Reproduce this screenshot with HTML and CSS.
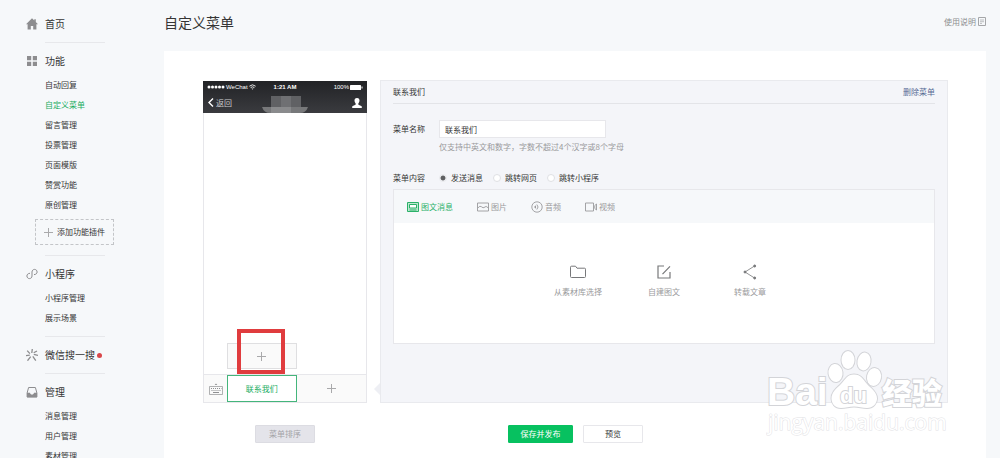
FILE: index.html
```
<!DOCTYPE html>
<html lang="zh-CN">
<head>
  <meta charset="UTF-8">
  <meta name="viewport" content="width=device-width, initial-scale=1.0">
  <title>自定义菜单</title>
  <link rel="stylesheet" href="styles.css">
</head>
<body>
  <nav class="sidebar">
    <div class="group">
      <a href="#" class="heading">
        <svg class="icon" viewBox="0 0 12 12"><path fill="#8d8d8f" d="M6 0.3L0 6.2h1.6V11.6h3.2V8h2.4v3.6h3.2V6.2H12L9.8 4V1.2H8.3v1.3z"/></svg>
        首页
      </a>
    </div>
    <div class="group">
      <div class="heading">
        <svg class="icon" viewBox="0 0 12 12" fill="#8d8d8f"><path d="M1 1h4.200v4.200H1zM6.800 1H11v4.200H6.800zM1 6.800h4.200V11H1zM6.800 6.800H11V11H6.800z"/></svg>
        功能
      </div>
      <ul>
        <li><a href="#">自动回复</a></li>
        <li><a href="#" class="current">自定义菜单</a></li>
        <li><a href="#">留言管理</a></li>
        <li><a href="#">投票管理</a></li>
        <li><a href="#">页面模版</a></li>
        <li><a href="#">赞赏功能</a></li>
        <li><a href="#">原创管理</a></li>
      </ul>
      <button class="add-plugin">
        <svg class="plus" viewBox="0 0 9 9"><path d="M4.500 0v9M0 4.500h9"/></svg>
        添加功能插件
      </button>
    </div>
    <div class="group">
      <div class="heading">
        <svg class="icon" viewBox="0 0 12 12" fill="none" stroke="#8d8d8f" stroke-linecap="round"><path d="M3.600 5.300C1.900 5.400.9 6.600.9 8s1.100 2.600 2.500 2.600S6 9.600 6 8V4c0-1.500 1.100-2.600 2.600-2.600S11.100 2.600 11.100 4 10 6.500 8.400 6.600"/></svg>
        小程序
      </div>
      <ul>
        <li><a href="#">小程序管理</a></li>
        <li><a href="#">展示场景</a></li>
      </ul>
    </div>
    <div class="group">
      <a href="#" class="heading">
        <svg class="icon" viewBox="0 0 12 12" fill="none" stroke="#8d8d8f" stroke-width="1.300"><path d="M6.300 0L5.800 4M1.200 1.600L3.900 4.600M0 6.700l3.800-.5M1.500 11.700L4.700 7.700M6.800 7.300l3 4.300M7.800 5.300l4.200 1M7.700 3.800L11 2"/></svg>
        微信搜一搜<span class="dot"></span>
      </a>
    </div>
    <div class="group">
      <div class="heading">
        <svg class="icon" viewBox="0 0 12 12"><path fill="none" stroke="#8d8d8f" d="M2.600 1.500h6.800L10.900 7v4H1.100V7z"/><path fill="#8d8d8f" d="M1 6.800h3c.2 1.200.8 1.800 2 1.800s1.800-.6 2-1.800h3v4.400H1z"/></svg>
        管理
      </div>
      <ul>
        <li><a href="#">消息管理</a></li>
        <li><a href="#">用户管理</a></li>
        <li><a href="#">素材管理</a></li>
      </ul>
    </div>
  </nav>

  <main>
    <header class="page-header">
      <h1>自定义菜单</h1>
      <a href="#" class="help">使用说明
        <svg viewBox="0 0 8 9" width="8" height="9" fill="none" stroke="#a5a6a8"><path d="M.5.5h7v8h-7z"/><path stroke-width=".7" d="M2 3h4M2 4.700h4M2 6.400h2"/></svg>
      </a>
    </header>

    <div class="card">
      <div class="editor">
        <section class="phone">
          <div class="phone-top">
            <div class="status-bar">
              <span class="carrier">
                <svg viewBox="0 0 18 4" width="18" height="4" fill="#fff"><circle cx="2" cy="2" r="1.500"/><circle cx="5.500" cy="2" r="1.500"/><circle cx="9" cy="2" r="1.500"/><circle cx="12.500" cy="2" r="1.500"/><circle cx="16" cy="2" r="1.500"/></svg>
                WeChat
                <svg viewBox="0 0 7 6" width="7" height="6" fill="none" stroke="#e8e8e8"><path d="M.4 2.200Q3.500-.6 6.600 2.200M1.600 3.600q1.900-1.600 3.800 0"/><path fill="#e8e8e8" stroke="none" d="M2.500 4.400h2l-1 1.400z"/></svg>
              </span>
              <b>1:21 AM</b>
              <span class="battery">100%
                <svg viewBox="0 0 13 5" width="13" height="5" fill="#fff"><rect width="11" height="5" rx=".6"/><path d="M11.500 1.500h1v2h-1z"/></svg>
              </span>
            </div>
            <div class="nav-bar">
              <span class="back">
                <svg viewBox="0 0 6 9" width="6" height="9" fill="none" stroke="#fff" stroke-width="1.400"><path d="M5 .5L1 4.500l4 4"/></svg>
                返回
              </span>
              <svg class="account" viewBox="0 0 48 17" width="48" height="17"><path fill="#4e4f52" d="M10 0h30v17H10z"/><path fill="#606164" d="M10 0h10v11H10zM30 0h10v11H30z"/><path fill="#6f7073" d="M20 0h10v11H20z"/><path fill="#77787a" d="M1 11h46q-2 6-8 6H9q-6 0-8-6z"/><path fill="#8a8b8d" d="M10 11h20v6H10z"/></svg>
              <svg viewBox="0 0 10 10" width="10" height="10" fill="#fff"><path d="M5 0c1.800 0 2.600 1.200 2.500 2.700-.1 1.300-.6 2-1.200 2.700v1c.4.8 3.300.8 3.500 2.200V10H.2V8.600C.4 7.200 3.300 7.200 3.700 6.400v-1c-.6-.7-1.100-1.400-1.200-2.700C2.400 1.200 3.200 0 5 0z"/></svg>
            </div>
          </div>
          <div class="phone-screen"></div>
          <div class="menu-bar">
            <span class="keyboard">
              <svg viewBox="0 0 14 12" width="14" height="12" fill="none" stroke="#8f9092"><path stroke-width=".7" d="M.5 3.500h13v8H.5z"/><path stroke-dasharray="1 1" d="M2 5.500h10.500M2.500 7.500h9.500"/><path d="M4 9.500h6"/><path fill="#8f9092" stroke="none" d="M5.700 2L7 .5 8.300 2z"/></svg>
            </span>
            <div class="menu-slot">
              <button class="submenu-add" aria-label="添加子菜单"><svg class="plus" viewBox="0 0 9 9"><path d="M4.500 0v9M0 4.500h9"/></svg></button>
              <span class="highlight"></span>
              <button class="menu-item selected">联系我们</button>
            </div>
            <div class="menu-slot">
              <button class="menu-item" aria-label="添加菜单"><svg class="plus" viewBox="0 0 9 9"><path d="M4.500 0v9M0 4.500h9"/></svg></button>
            </div>
          </div>
        </section>

        <section class="panel">
          <div class="panel-title">
            <h2>联系我们</h2>
            <a href="#">删除菜单</a>
          </div>
          <div class="field">
            <label for="menu-name">菜单名称</label>
            <div class="control">
              <input type="text" id="menu-name" value="联系我们">
              <p class="hint">仅支持中英文和数字，字数不超过4个汉字或8个字母</p>
            </div>
          </div>
          <div class="field radios" role="radiogroup" aria-labelledby="content-label">
            <span class="label" id="content-label">菜单内容</span>
            <label><input type="radio" name="content" checked>发送消息</label>
            <label><input type="radio" name="content">跳转网页</label>
            <label><input type="radio" name="content">跳转小程序</label>
          </div>
          <div class="content-box">
            <div class="tabs">
              <button class="active">
                <svg viewBox="0 0 12 10" fill="none" stroke="currentColor"><path fill="#bfe8d1" d="M.5.5h11v9H.5z"/><path fill="#fff" d="M2.500 2.500h7v3.500h-7z"/><path d="M2.500 8h7"/></svg>图文消息
              </button>
              <button>
                <svg viewBox="0 0 12 10" fill="none" stroke="currentColor" stroke-width=".9"><path d="M.5 1h11v8H.5zM1 5.800q2-2.600 3.600-1T7 5.500q2-2.400 4.500.5"/></svg>图片
              </button>
              <button>
                <svg viewBox="0 0 12 12" fill="none" stroke="currentColor" stroke-width=".9"><circle cx="6" cy="6" r="5.200"/><path d="M5.800 3.500q2.500 2.500 0 5"/><path fill="currentColor" stroke="none" d="M3 6l2-1.800v3.600z"/></svg>音频
              </button>
              <button>
                <svg viewBox="0 0 12 10" fill="none" stroke="currentColor" stroke-width=".9"><path d="M.5 1H8.500v8H.5zM9.800 3.500l1.700-1.500v6L9.800 6.500z"/></svg>视频
              </button>
            </div>
            <div class="sources">
              <button>
                <svg viewBox="0 0 16 16" fill="none" stroke="#77787a"><path d="M.5 3.200q0-1 1-1h4l1.500 2h7.500q1 0 1 1v7.300q0 1-1 1h-13q-1 0-1-1z"/></svg>
                从素材库选择
              </button>
              <button>
                <svg viewBox="0 0 16 16" fill="none" stroke="#77787a" stroke-width="1.200"><path d="M8 2H2v12h12V8M6.500 10.200L14 2.300"/></svg>
                自建图文
              </button>
              <button>
                <svg viewBox="0 0 16 16" fill="#77787a" stroke="#77787a"><path fill="none" stroke-width=".8" d="M12.500 2L3 8l9.500 6"/><circle cx="12.700" cy="2" r="1"/><circle cx="3" cy="8" r="1"/><circle cx="12.700" cy="14" r="1"/></svg>
                转载文章
              </button>
            </div>
          </div>
        </section>
      </div>

      <div class="actions">
        <button class="btn disabled" disabled>菜单排序</button>
        <div class="actions-main">
          <button class="btn primary">保存并发布</button>
          <button class="btn">预览</button>
        </div>
      </div>
    </div>
  </main>

  <svg class="watermark" viewBox="0 0 184 88" width="184" height="88">
    <text class="latin" x="1" y="57">Bai</text>
    <ellipse cx="69.500" cy="25" rx="7" ry="9" transform="rotate(-8 69.500 25)"/>
    <ellipse cx="82" cy="12" rx="6.500" ry="9"/>
    <ellipse cx="98" cy="13.500" rx="6.500" ry="9" transform="rotate(10 98 13.500)"/>
    <ellipse cx="108" cy="29" rx="7" ry="9" transform="rotate(10 108 29)"/>
    <path d="M88 26.500c7 0 9 5 13 9.500s10 8 10 14.500c0 5-4 9.500-10 9.500-5 0-8-1.500-13-1.500S80 60 75 60c-6 0-9.500-4.500-9.500-9.500 0-6.500 5-10 9.500-14.500S81 26.500 88 26.500z"/>
    <text class="du" x="74" y="55">du</text>
    <text class="han" x="116" y="56">经验</text>
    <text class="url" x="2" y="82">jingyan.baidu.com</text>
  </svg>
</body>
</html>
```
FILE: styles.css
```
* {
  box-sizing: border-box;
}

body {
  margin: 0;
  height: 100vh;
  overflow: hidden;
  display: flex;
  position: relative;
  background: #f6f8fa;
  color: #353535;
  font-family: "Noto Sans CJK SC", sans-serif;
  font-size: 8px;
  line-height: 12px;
}

h1, h2, p, ul {
  margin: 0;
  padding: 0;
  font-weight: normal;
}

ul {
  list-style: none;
}

a {
  color: inherit;
  text-decoration: none;
}

button, input {
  font: inherit;
  color: inherit;
  margin: 0;
}

button {
  padding: 0;
  border: none;
  background: none;
  cursor: pointer;
}

svg {
  display: block;
  flex-shrink: 0;
}

.plus {
  width: 9px;
  height: 9px;
  stroke: #a9a9ab;
}

/* sidebar */
.sidebar {
  flex: 0 0 164px;
  min-width: 0;
  padding: 14px 59px 0 45px;
}

.group {
  padding-bottom: 8px;
  margin-bottom: 8px;
  border-bottom: 1px solid #e7e8eb;
}

.heading {
  display: flex;
  align-items: center;
  margin-left: -19px;
  font-size: 10px;
  line-height: 20px;
  white-space: nowrap;
}

.icon {
  width: 12px;
  height: 12px;
  margin-right: 7px;
}

.group ul {
  padding-top: 4px;
  line-height: 20px;
}

.current {
  color: #1aad5f;
}

.dot {
  width: 5px;
  height: 5px;
  margin-left: 2px;
  border-radius: 50%;
  background: #d9474a;
}

.add-plugin {
  display: flex;
  align-items: center;
  justify-content: center;
  gap: 4px;
  width: 79px;
  height: 26px;
  margin: 4px 0 2px -10px;
  border: 1px dashed #c3c5c8;
  white-space: nowrap;
}

/* main column */
main {
  flex: 1;
  min-width: 0;
  display: flex;
  flex-direction: column;
  padding-right: 14px;
}

.page-header {
  display: flex;
  align-items: center;
  justify-content: space-between;
  height: 51px;
  padding-bottom: 8px;
}

h1 {
  font-size: 14px;
  line-height: 20px;
}

.help {
  display: flex;
  align-items: center;
  gap: 2px;
  color: #8d8e90;
}

.card {
  flex: 1;
  padding: 29px 38px 0 39px;
  background: #fff;
}

.editor {
  display: flex;
  gap: 13px;
}

/* phone preview */
.phone {
  flex: 0 0 164px;
  display: flex;
  flex-direction: column;
  padding-top: 1px;
}

.phone-top {
  height: 32px;
  padding: 0 4px;
  background: linear-gradient(#222326, #3a3b3f);
  color: #fff;
}

.status-bar {
  display: grid;
  grid-template-columns: 1fr auto 1fr;
  align-items: center;
  height: 11px;
  font-family: "Liberation Sans", sans-serif;
  font-size: 6px;
}

.carrier, .battery, .back {
  display: flex;
  align-items: center;
  gap: 1px;
}

.battery {
  justify-content: flex-end;
}

.nav-bar {
  display: grid;
  grid-template-columns: 1fr auto 1fr;
  align-items: center;
  height: 21px;
  padding: 0 1px;
  color: #c9c9cb;
}

.back {
  gap: 2px;
}

.nav-bar > :last-child {
  justify-self: end;
}

.account {
  align-self: end;
}

.phone-screen {
  flex: 1;
  border: 1px solid #e7e7eb;
  border-width: 0 1px;
}

.menu-bar {
  display: flex;
  height: 29px;
  border: 1px solid #e7e7eb;
  background: #fafafa;
}

.keyboard {
  display: flex;
  flex: 0 0 23px;
  align-items: center;
  justify-content: center;
}

.menu-slot {
  flex: 1;
  position: relative;
}

.menu-item {
  display: flex;
  align-items: center;
  justify-content: center;
  width: 100%;
  height: 100%;
}

.selected {
  border: 1px solid #44b57b;
  background: #fff;
  color: #1aad5f;
}

.submenu-add {
  position: absolute;
  left: 0;
  bottom: 33px;
  display: flex;
  align-items: center;
  justify-content: center;
  width: 100%;
  height: 26px;
  border: 1px solid #dfdfe1;
  background: #fafafa;
}

.highlight {
  position: absolute;
  left: 10px;
  bottom: 28px;
  width: 48px;
  height: 45px;
  border: 4px solid #e03c3e;
}

/* edit panel */
.panel {
  flex: 1;
  position: relative;
  min-height: 323px;
  padding: 0 12px;
  border: 1px solid #e9eaee;
  background: #f4f5f9;
}

.panel::before {
  content: "";
  position: absolute;
  left: -7px;
  bottom: 7px;
  border: 6px solid transparent;
  border-left-width: 0;
  border-right-color: #eeeff4;
}

.panel-title {
  display: flex;
  align-items: center;
  justify-content: space-between;
  height: 23px;
  border-bottom: 1px solid #e3e4e8;
}

h2 {
  font-size: 8px;
}

.panel-title a {
  color: #576b95;
}

.field {
  display: flex;
  margin-top: 16px;
}

.field > label:first-child, .label {
  flex: 0 0 46px;
  line-height: 18px;
}

.control input {
  display: block;
  width: 167px;
  height: 18px;
  padding: 0 5px;
  border: 1px solid #e7e7eb;
  background: #fff;
}

.hint {
  margin-top: 3px;
  color: #9a9a9c;
}

.radios {
  align-items: center;
  gap: 10px;
}

.radios .label {
  margin-right: -10px;
}

.radios label {
  display: flex;
  align-items: center;
  gap: 4px;
}

.radios input {
  appearance: none;
  width: 8px;
  height: 8px;
  border: 1px solid #dfe0e4;
  border-radius: 50%;
  background: #fff;
}

.radios input:checked {
  border-color: #e9eaed;
  background: radial-gradient(circle, #5f6062 2px, #f6f7fa 3px);
}

.content-box {
  margin-top: 2px;
  border: 1px solid #e7e7eb;
  background: #fff;
}

.tabs {
  display: flex;
  gap: 24px;
  height: 33px;
  padding: 0 13px;
  background: #f6f8fa;
  color: #9a9a9c;
}

.tabs button {
  display: flex;
  align-items: center;
  gap: 2px;
}

.tabs svg {
  width: 12px;
  height: 12px;
}

.tabs .active {
  color: #2bb169;
}

.sources {
  display: flex;
  justify-content: center;
  padding: 41px 0 45px;
  color: #9a9a9c;
}

.sources button {
  display: flex;
  flex-direction: column;
  align-items: center;
  gap: 6px;
  width: 86px;
}

.sources svg {
  width: 16px;
  height: 16px;
}

/* bottom buttons */
.actions {
  display: grid;
  grid-template-columns: 164px 1fr 164px;
  margin-top: 22px;
}

.actions-main {
  display: flex;
  justify-content: center;
  gap: 10px;
}

.btn {
  width: 60px;
  height: 18px;
  border: 1px solid #e7e7eb;
  border-radius: 1px;
  background: #fff;
}

.primary {
  width: 65px;
  border-color: #07c160;
  background: #07c160;
  color: #fff;
}

.disabled {
  justify-self: center;
  border-color: #dcdce2;
  background: #e4e4ea;
  color: #a3a3a8;
}

/* site mark */
.watermark {
  position: absolute;
  right: 50px;
  bottom: 22px;
  pointer-events: none;
  fill: #fff;
  stroke: #d3d4d8;
  stroke-width: 2px;
  paint-order: stroke;
}

.latin {
  font: bold 39px "Liberation Sans", sans-serif;
}

.du {
  font: bold 22px "Liberation Sans", sans-serif;
}

.han {
  font: 900 30px "Noto Sans CJK SC", sans-serif;
}

.url {
  font: 21px "Open Sans", sans-serif;
  stroke: #e2e2e5;
  stroke-width: 1px;
}
```
